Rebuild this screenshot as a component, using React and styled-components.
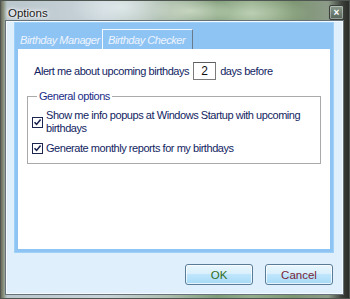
import React from "react";
import styled, { createGlobalStyle } from "styled-components";

const Global = createGlobalStyle`
  html, body { margin: 0; padding: 0; }
  body { width: 350px; height: 299px; overflow: hidden; }
`;

const Window = styled.div`
  width: 350px;
  height: 299px;
  box-sizing: border-box;
  display: flex;
  flex-direction: column;
  font-family: "Liberation Sans", Arial, sans-serif;
  background:
    radial-gradient(ellipse 40px 14px at 190px 10px, rgba(235,245,225,0.55), transparent),
    radial-gradient(ellipse 60px 16px at 250px 12px, rgba(225,240,215,0.5), transparent),
    radial-gradient(ellipse 50px 20px at 120px 6px, rgba(240,248,250,0.6), transparent),
    linear-gradient(to right, #6d6a58 0px, #8f9a88 3px, #b9c6cc 6px, #c9d4da 30%, #aebfae 48%, #7f9c79 62%, #94ad8c 72%, #7d9672 84%, #8c9b88 94%, #3c3f3a 98%, #2a2c28 100%);
  border: 1px solid #4f5550;
`;

const TitleBar = styled.div`
  height: 20px;
  display: flex;
  align-items: center;
  justify-content: space-between;
  padding: 0 5px 0 7px;
`;

const Title = styled.span`
  font-size: 11.5px;
  color: #1a1a1a;
  text-shadow: 0 0 6px #fff, 0 0 4px #fff, 0 0 2px #fff;
  margin-top: 4px;
`;

const CloseButton = styled.div`
  width: 13px;
  height: 13px;
  margin-top: 4px;
  border: 1px solid #3a3f3a;
  border-radius: 2px;
  background: linear-gradient(#8a9a8c, #56645a);
  box-shadow: inset 0 0 0 1px rgba(255,255,255,0.35);
  display: flex;
  align-items: center;
  justify-content: center;
  color: #fff;
  font-size: 10px;
  font-weight: bold;
  line-height: 1;
`;

const Client = styled.div`
  flex: 1;
  margin: 0 5px 6px 4px;
  border: 1px solid #66727a;
  box-shadow: inset 0 0 0 1px #f4faff;
  background: #dfeffb;
  display: flex;
  flex-direction: column;
  padding: 1px 9px 9px 8px;
`;

const TabControl = styled.div`
  height: 227px;
  background: #8ec4f3;
  display: flex;
  flex-direction: column;
  padding: 0 4px 4px 4px;
  box-shadow: inset 0 0 0 1px #9fd0f7;
`;

const TabStrip = styled.div`
  height: 27px;
  display: flex;
  align-items: flex-end;
  margin: 0 -4px 0 -3px;
`;

const Tab = styled.div`
  height: ${(p) => (p.$active ? 20 : 18)}px;
  width: ${(p) => p.$w}px;
  box-sizing: border-box;
  display: flex;
  align-items: center;
  padding-left: 5px;
  font-size: 11px;
  font-style: italic;
  letter-spacing: -0.45px;
  color: #eef4ff;
  border-left: ${(p) => (p.$active ? "1px solid #f4f9ff" : "none")};
  border-top: ${(p) => (p.$active ? "1px solid #f4f9ff" : "none")};
  border-right: ${(p) => (p.$active ? "1px solid #6a7c8c" : "none")};
  background: #8ec4f3;
`;

const Panel = styled.div`
  flex: 1;
  background: #fff;
  padding: 13px 9px 0 9px;
  color: #121e62;
  font-size: 11px;
  letter-spacing: -0.45px;
`;

const AlertRow = styled.div`
  display: flex;
  align-items: center;
  height: 18px;
  padding-left: 7px;
  gap: 4px;
`;

const NumberBox = styled.div`
  width: 23px;
  height: 18px;
  box-sizing: border-box;
  border: 1px solid #7a7a7a;
  border-top-color: #5e5e5e;
  display: flex;
  align-items: center;
  justify-content: center;
  color: #111;
  font-size: 12px;
  letter-spacing: 0;
`;

const Group = styled.fieldset`
  margin: 10px 0 0 0;
  padding: 6px 4px 8px 4px;
  border: 1px solid #aaaaaa;
  box-shadow: 1px 1px 0 #fff;
  display: flex;
  flex-direction: column;
  gap: 7px;
  min-width: 0;
`;

const Legend = styled.legend`
  padding: 0 2px;
  margin-left: 5px;
  line-height: 13px;
  color: #1a2d86;
`;

const CheckRow = styled.div`
  display: flex;
  align-items: center;
  gap: 3px;
  line-height: 13px;
`;

const Box = styled.span`
  width: 11px;
  height: 11px;
  flex: none;
  box-sizing: border-box;
  border: 1px solid #1c2450;
  background: #fff;
  display: flex;
  align-items: center;
  justify-content: center;
`;

const Footer = styled.div`
  display: flex;
  justify-content: flex-end;
  gap: 12px;
  margin-top: 11px;
  padding-right: 1px;
`;

const Button = styled.div`
  width: ${(p) => p.$w}px;
  height: 21px;
  box-sizing: border-box;
  border: 1px solid #5a7c99;
  border-radius: 3px;
  background: linear-gradient(#eaf6fd 0%, #d9f0fc 45%, #bee6fd 50%, #a7d9f5 100%);
  box-shadow: inset 0 0 0 1px rgba(255,255,255,0.7);
  display: flex;
  align-items: center;
  justify-content: center;
  font-size: 11.5px;
  color: ${(p) => p.$color};
`;

const Check = () => (
  <svg width="9" height="9" viewBox="0 0 9 9">
    <path d="M1.5 4.2 L3.6 6.4 L7.6 1.6" fill="none" stroke="#1c2450" strokeWidth="1.6" />
  </svg>
);

export default function App() {
  return (
    <>
      <Global />
      <Window>
        <TitleBar>
          <Title>Options</Title>
          <CloseButton>×</CloseButton>
        </TitleBar>
        <Client>
          <TabControl>
            <TabStrip>
              <Tab $w={87}>Birthday Manager</Tab>
              <Tab $w={91} $active>Birthday Checker</Tab>
            </TabStrip>
            <Panel>
              <AlertRow>
                <span>Alert me about upcoming birthdays</span>
                <NumberBox>2</NumberBox>
                <span>days before</span>
              </AlertRow>
              <Group>
                <Legend>General options</Legend>
                <CheckRow>
                  <Box><Check /></Box>
                  <span>Show me info popups at Windows Startup with upcoming birthdays</span>
                </CheckRow>
                <CheckRow>
                  <Box><Check /></Box>
                  <span>Generate monthly reports for my birthdays</span>
                </CheckRow>
              </Group>
            </Panel>
          </TabControl>
          <Footer>
            <Button $w={68} $color="#2f6e22">OK</Button>
            <Button $w={68} $color="#7a2436">Cancel</Button>
          </Footer>
        </Client>
      </Window>
    </>
  );
}
